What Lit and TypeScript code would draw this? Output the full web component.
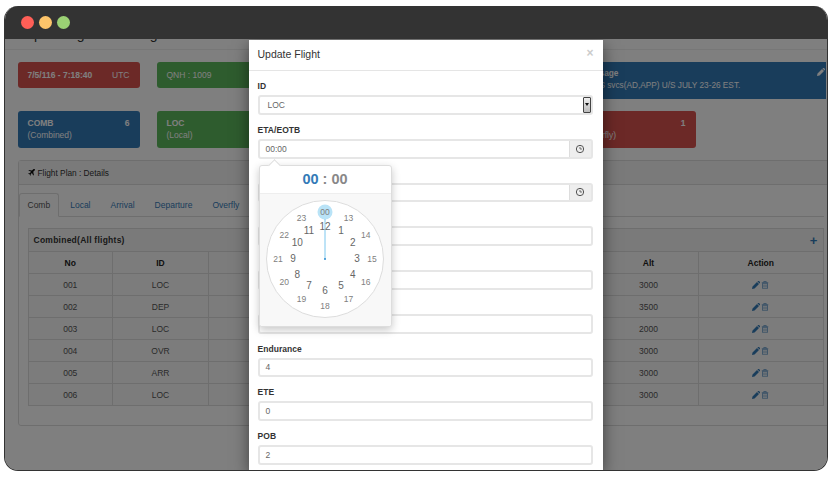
import { LitElement, html, css, svg } from 'lit';
import { customElement } from 'lit/decorators.js';

const pencil = html`<svg class="icon" viewBox="0 0 16 16"><path fill="currentColor" d="M0 16l1-5 9-9 4 4-9 9zM11 1l1-1q1-.4 2 0l2 2q.4 1 0 2l-1 1z"/></svg>`;
const trash = html`<svg class="icon trash" viewBox="0 0 16 16"><path fill="none" stroke="currentColor" stroke-width="1.6" d="M3 4.5h10v10q0 1-1 1H4q-1 0-1-1zM1.500 3.500h13M5.500 3V1h5v2M6 7v6M10 7v6"/></svg>`;
const clock = html`<svg class="clock-icon" viewBox="0 0 12 12"><circle cx="6" cy="6" r="4.400" fill="none" stroke="currentColor" stroke-width="1.200"/><path d="M6 3.500V6h2.500" fill="none" stroke="currentColor" stroke-width="1"/></svg>`;
const plane = html`<svg class="plane" viewBox="0 0 16 16"><path fill="currentColor" d="M15.500.500q1 1-.500 3l-3 3 1.500 7-1.500 1.500-3-6-3 3 .5 2.500-1 1-2-3.500L.500 10l1-1 2.500.5 3-3-6-3L2 2l7 1.500 3-3q2-1.500 3.500-.500z"/></svg>`;

const rows = [
  ['001', 'LOC', '3000'],
  ['002', 'DEP', '3500'],
  ['003', 'LOC', '2000'],
  ['004', 'OVR', '3000'],
  ['005', 'ARR', '3000'],
  ['006', 'LOC', '3000'],
];

const OUTER_R = 47;
const INNER_R = 32;

@customElement('app-root')
export class AppRoot extends LitElement {
  static styles = css`
    :host {
      display: block;
      width: 833px;
      height: 477px;
      box-sizing: border-box;
      padding: 6px 0 0 4px;
      background: #fff;
      font-family: 'Liberation Sans', Arial, sans-serif;
      color: #333;
      overflow: hidden;
    }
    .window {
      width: 824px;
      height: 465px;
      box-sizing: border-box;
      border: 1.5px solid #333;
      border-top: 0;
      border-radius: 14px;
      overflow: hidden;
      display: flex;
      flex-direction: column;
      background: #fff;
    }
    .titlebar {
      flex: none;
      height: 32px;
      background: #333;
      display: flex;
      align-items: center;
      gap: 5px;
      padding: 0 0 1px 15.500px;
    }
    .dot {
      width: 13px;
      height: 13px;
      border-radius: 50%;
    }
    .content {
      flex: 1;
      position: relative;
      overflow: hidden;
      padding-left: 12.500px;
    }
    .page-title {
      height: 10px;
      margin-left: -12.500px;
      padding-left: 18px;
      border-bottom: 1px solid #eee;
      font-size: 14px;
      line-height: 14px;
    }
    .page-title span {
      display: block;
      transform: translateY(-12px);
    }
    .cards {
      display: grid;
      grid-template-columns: repeat(5, 122px) 1fr;
      column-gap: 17px;
      row-gap: 12px;
      grid-template-rows: 37px 37px;
      margin-top: 12px;
      width: 808px;
    }
    .card {
      border-radius: 3px;
      color: #fff;
      font-size: 8.500px;
      line-height: 12px;
      padding: 6px 10px;
      box-sizing: border-box;
    }
    .short {
      height: 26px;
      display: flex;
      justify-content: space-between;
      align-items: center;
      padding-top: 0;
      padding-bottom: 0;
    }
    .top {
      display: flex;
      justify-content: space-between;
      font-weight: bold;
    }
    .red { background: #d9534f; }
    .green { background: #5cb85c; }
    .blue { background: #337ab7; }
    .message {
      grid-column: 5 / 7;
      border-radius: 0;
      padding-right: 1px;
      font-size: 8.250px;
    }
    .message .icon {
      width: 8px;
      height: 8px;
    }
    .date { font-weight: bold; }
    .panel {
      margin-top: 12px;
      width: 816px;
      border: 1px solid #ddd;
      box-sizing: border-box;
      border-radius: 3px;
    }
    .panel-head {
      height: 23px;
      background: #f5f5f5;
      border-bottom: 1px solid #ddd;
      display: flex;
      align-items: center;
      gap: 3px;
      padding-left: 9px;
      font-size: 8.300px;
    }
    .plane {
      width: 7px;
      height: 7px;
      color: #111;
    }
    .panel-body {
      padding: 8px 9px 19px 0;
    }
    .tabs {
      display: flex;
      gap: 2px;
      height: 24px;
      border-bottom: 1px solid #ddd;
      font-size: 8.500px;
      margin-bottom: 11px;
      box-sizing: border-box;
    }
    .tab {
      padding: 0 8px;
      display: flex;
      align-items: center;
      color: #337ab7;
      height: 24px;
      box-sizing: border-box;
      border: 1px solid transparent;
    }
    .tab.active {
      color: #555;
      border-color: #ddd;
      border-bottom-color: #fff;
      background: #fff;
      border-radius: 3px 3px 0 0;
    }
    .sheet {
      margin-left: 9px;
      border: 1px solid #ddd;
      background: #f9f9f9;
    }
    .sheet-head {
      height: 22px;
      background: #f5f5f5;
      display: flex;
      align-items: center;
      justify-content: space-between;
      padding: 0 5px;
      font-size: 8.500px;
      font-weight: bold;
      letter-spacing: 0.250px;
    }
    .plus {
      color: #337ab7;
      font-size: 13px;
      line-height: 13px;
    }
    table {
      width: 100%;
      table-layout: fixed;
      border-collapse: collapse;
      font-size: 8.500px;
    }
    th, td {
      height: 21px;
      padding: 0;
      border: 1px solid #ddd;
      text-align: center;
    }
    th { color: #222; }
    tr > :first-child { border-left: 0; }
    tr > :last-child { border-right: 0; }
    tr:last-child td { border-bottom: 0; }
    td { color: #555; }
    td .icon {
      width: 8px;
      height: 8px;
      color: #337ab7;
      margin: 0 0.500px;
      vertical-align: -1px;
    }
    td .trash { opacity: 0.75; }
    .backdrop {
      position: absolute;
      inset: 0;
      background: rgba(0, 0, 0, 0.5);
    }
    .modal {
      position: absolute;
      top: 1px;
      left: 243.500px;
      width: 354px;
      bottom: 0;
      background: #fff;
      box-shadow: 0 5px 15px rgba(0, 0, 0, 0.5);
    }
    .modal-head {
      height: 28px;
      padding: 0 9px 2px;
      border-bottom: 1px solid #e5e5e5;
      display: flex;
      align-items: center;
      justify-content: space-between;
      font-size: 10.500px;
    }
    .close {
      font-size: 12px;
      font-weight: bold;
      color: #ccc;
      margin-top: -3px;
    }
    .modal-body {
      padding: 10px 10px 0 9px;
    }
    .group {
      position: relative;
      padding-bottom: 10px;
    }
    label {
      display: block;
      height: 10px;
      line-height: 10px;
      margin-bottom: 4px;
      font-size: 8.500px;
      font-weight: bold;
      letter-spacing: 0.050px;
    }
    .field {
      height: 19.750px;
      box-sizing: border-box;
      border: 2px solid #e6e6e6;
      border-radius: 3px;
      display: flex;
      align-items: center;
      font-size: 8.500px;
      color: #666;
      padding-left: 6px;
      background: #fff;
    }
    .select {
      padding-left: 8px;
      padding-right: 0;
      justify-content: space-between;
    }
    .spin {
      width: 8px;
      height: 16px;
      background: linear-gradient(#eee, #bbb);
      border: 1px solid #444;
      border-radius: 1px;
      box-sizing: border-box;
      display: flex;
      align-items: center;
      justify-content: center;
    }
    .spin::after {
      content: '';
      border-top: 3px solid #111;
      border-left: 2px solid transparent;
      border-right: 2px solid transparent;
    }
    .addon {
      padding-right: 0;
      justify-content: space-between;
    }
    .addon-btn {
      width: 21px;
      height: 100%;
      background: #eee;
      border-left: 1px solid #ddd;
      display: flex;
      align-items: center;
      justify-content: center;
      color: #555;
    }
    .clock-icon {
      width: 10px;
      height: 10px;
    }
    .icon {
      display: inline-block;
    }
    .popover {
      position: absolute;
      left: 1px;
      top: 40px;
      width: 133px;
      height: 162px;
      box-sizing: border-box;
      background: #fff;
      border: 1px solid #ddd;
      border-radius: 3px;
      box-shadow: 0 3px 8px rgba(0, 0, 0, 0.22);
      z-index: 2;
      display: flex;
      flex-direction: column;
    }
    .popover::before {
      content: '';
      position: absolute;
      left: 10px;
      top: -5px;
      width: 8px;
      height: 8px;
      background: #fff;
      border-left: 1px solid #ddd;
      border-top: 1px solid #ddd;
      transform: rotate(45deg);
    }
    .time {
      height: 27px;
      display: flex;
      align-items: center;
      justify-content: center;
      gap: 4px;
      font-size: 14.500px;
      font-weight: bold;
      color: #888;
      border-bottom: 1px solid #eee;
      position: relative;
    }
    .time b { color: #337ab7; }
    .clock-body {
      flex: 1;
      background: #f8f8f8;
      display: flex;
      justify-content: center;
      padding-top: 6px;
      border-radius: 0 0 3px 3px;
    }
    .face {
      position: relative;
      width: 118px;
      height: 118px;
      box-sizing: border-box;
      border: 1px solid #ddd;
      border-radius: 50%;
      background: #fff;
    }
    .face svg {
      position: absolute;
      inset: -1px;
      width: 118px;
      height: 118px;
    }
    .num {
      position: absolute;
      transform: translate(-50%, -50%);
      line-height: 1;
    }
    .num.inner {
      font-size: 10px;
      color: #666;
    }
    .num.outer {
      font-size: 8.500px;
      color: #808080;
    }
  `;

  private renderFace() {
    const center = 58;
    const place = (i: number, r: number) => {
      const a = (i * Math.PI) / 6;
      return `left:${center + r * Math.sin(a)}px;top:${center - r * Math.cos(a)}px`;
    };
    return html`
      <div class="face">
        <svg viewBox="0 0 118 118">
          ${svg`<circle cx="59" cy="12" r="7.500" fill="#b9e3f7"/>
          <line x1="59" y1="59" x2="59" y2="19" stroke="#7cc7ee" stroke-width="1"/>
          <circle cx="59" cy="59" r="1" fill="#2a8bd0"/>`}
        </svg>
        ${Array.from({ length: 12 }, (_, i) => html`
          <span class="num outer" style=${place(i, OUTER_R)}>${i === 0 ? '00' : 12 + i}</span>
          <span class="num inner" style=${place(i, INNER_R)}>${i === 0 ? 12 : i}</span>
        `)}
      </div>
    `;
  }

  // fields under the clock popover keep only their box, the text can't be seen
  private renderField(name: string, value: string, withClock = false) {
    return html`
      <div class="group">
        <label>${name}</label>
        ${withClock
          ? html`<div class="field addon"><span>${value}</span><span class="addon-btn">${clock}</span></div>`
          : html`<div class="field">${value}</div>`}
      </div>
    `;
  }

  render() {
    return html`
      <div class="window">
        <div class="titlebar">
          <span class="dot" style="background:#ff5f57"></span>
          <span class="dot" style="background:#fdc46a"></span>
          <span class="dot" style="background:#9bd174"></span>
        </div>
        <div class="content">
          <div class="page-title"><span>Operating Airfield Log</span></div>
          <div class="cards">
            <div class="card red short"><span class="date">7/5/116 - 7:18:40</span><span>UTC</span></div>
            <div class="card green short"><span>QNH : 1009</span></div>
            <div></div>
            <div></div>
            <div class="card blue message">
              <div class="top"><span>Message</span>${pencil}</div>
              <div>ATCS svcs(AD,APP) U/S JULY 23-26 EST.</div>
            </div>
            <div class="card blue">
              <div class="top"><span>COMB</span><span>6</span></div>
              <div>(Combined)</div>
            </div>
            <div class="card green">
              <div class="top"><span>LOC</span></div>
              <div>(Local)</div>
            </div>
            <div class="card blue"></div>
            <div class="card green"></div>
            <div class="card red">
              <div class="top"><span>OVR</span><span>1</span></div>
              <div>(Overfly)</div>
            </div>
          </div>
          <div class="panel">
            <div class="panel-head">${plane}<span>Flight Plan : Details</span></div>
            <div class="panel-body">
              <div class="tabs">
                <div class="tab active">Comb</div>
                <div class="tab">Local</div>
                <div class="tab">Arrival</div>
                <div class="tab">Departure</div>
                <div class="tab">Overfly</div>
              </div>
              <div class="sheet">
                <div class="sheet-head"><span>Combined(All flights)</span><span class="plus">+</span></div>
                <table>
                  <colgroup>
                    <col style="width:84px" /><col style="width:96px" /><col />
                    <col style="width:100px" /><col style="width:124px" />
                  </colgroup>
                  <thead>
                    <tr><th>No</th><th>ID</th><th></th><th>Alt</th><th>Action</th></tr>
                  </thead>
                  <tbody>
                    ${rows.map(
                      ([no, id, alt]) => html`
                        <tr>
                          <td>${no}</td><td>${id}</td><td></td><td>${alt}</td>
                          <td>${pencil}${trash}</td>
                        </tr>
                      `
                    )}
                  </tbody>
                </table>
              </div>
            </div>
          </div>
          <div class="backdrop"></div>
          <div class="modal">
            <div class="modal-head"><span>Update Flight</span><span class="close">×</span></div>
            <div class="modal-body">
              <div class="group">
                <label>ID</label>
                <div class="field select"><span>LOC</span><span class="spin"></span></div>
              </div>
              <div class="group">
                <label>ETA/EOTB</label>
                <div class="field addon"><span>00:00</span><span class="addon-btn">${clock}</span></div>
                <div class="popover">
                  <div class="time"><b>00</b><span>:</span><span>00</span></div>
                  <div class="clock-body">${this.renderFace()}</div>
                </div>
              </div>
              ${this.renderField('', '', true)}
              ${this.renderField('', '')}
              ${this.renderField('', '')}
              ${this.renderField('', '')}
              ${this.renderField('Endurance', '4')}
              ${this.renderField('ETE', '0')}
              ${this.renderField('POB', '2')}
            </div>
          </div>
        </div>
      </div>
    `;
  }
}
